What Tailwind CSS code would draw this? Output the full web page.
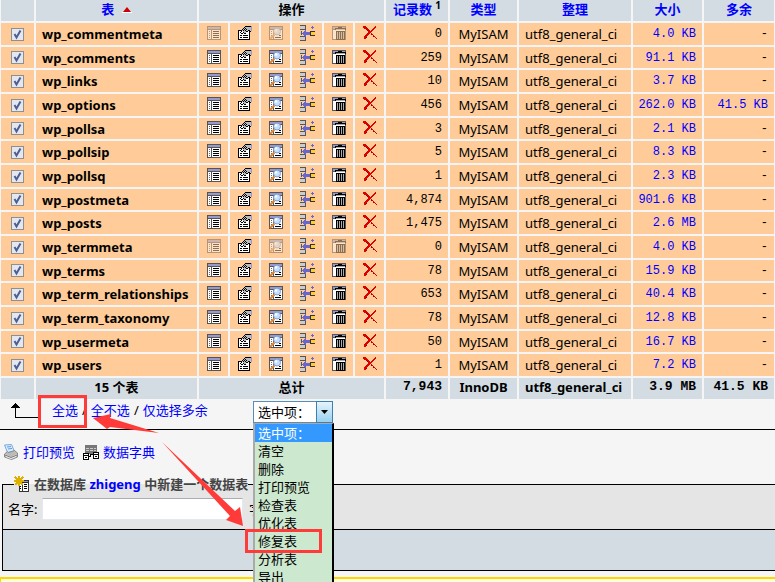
<!DOCTYPE html>
<html lang="zh-CN">
<head>
    <meta charset="UTF-8">
    <meta name="viewport" content="width=device-width, initial-scale=1.0">
    <title>phpMyAdmin - zhigeng</title>
    <script src="https://cdn.jsdelivr.net/npm/@tailwindcss/browser@4"></script>
</head>
<body class="relative h-screen overflow-hidden bg-[#f5f5f5] font-['Noto_Sans','Noto_Sans_CJK_SC',sans-serif] text-[13px] leading-5 text-black">
    <!-- Icon sprites -->
    <svg class="hidden" shape-rendering="crispEdges">
        <symbol id="browse" viewBox="0 0 14 14">
            <path fill="#555" d="M0 0h14v14H0z"/>
            <path fill="#99c" d="M1 1h12v2H1z"/>
            <path fill="#fff" d="M1 4h3v9H1zM5 4h8v9H5z"/>
            <path fill="#666" d="M2 5h1v1H2zM2 7h1v1H2zM2 9h1v1H2zM2 11h1v1H2z"/>
            <path fill="#000" d="M6 5h6v1H6zM6 7h6v1H6zM6 9h6v1H6zM6 11h6v1H6z"/>
        </symbol>
        <symbol id="props" viewBox="0 0 14 14">
            <path fill="#000" d="M0 4h12v10H0z"/>
            <path fill="#fff" d="M1 5h10v8H1z"/>
            <path fill="#000" d="M2 9h2v1H2zM5 9h5v1H5zM2 11h2v1H2zM5 11h5v1H5z"/>
            <path fill="#000" d="M2 6h1v1H2zM3 5h1v1H3zM4 3h1v1H4zM5 2h1v1H5zM6 1h1v1H6zM7 0h6v1H7zM3 7h2v1H3zM5 6h1v1H5zM6 7h2v1H6zM8 5h2v1H8zM10 4h2v1h-2zM12 5h1v1h-1z"/>
            <path fill="#bbb" d="M7 1h6v3h-3v1H8v2H6V6H5V5H4V4h1V3h1V2h1z"/>
            <path fill="#000" d="M7 2h1v1H7zM6 3h1v1H6zM8 3h1v1H8zM7 4h1v1H7zM5 4h1v1H5z"/>
            <path fill="#99c" d="M13 0h1v5h-1z"/>
        </symbol>
        <symbol id="search" viewBox="0 0 14 14">
            <path fill="#555" d="M0 0h14v14H0z"/>
            <path fill="#99c" d="M1 1h12v2H1z"/>
            <path fill="#fff" d="M1 4h3v9H1zM5 4h8v9H5z"/>
            <path fill="#666" d="M2 5h1v1H2zM2 7h1v1H2zM2 9h1v1H2z"/>
            <path fill="#000" d="M10 9h2v1h-2zM6 11h6v1H6z"/>
            <g shape-rendering="auto">
                <path stroke="#e08030" stroke-width="2" d="M5.500 8.500l-4.500 4.500"/>
                <circle cx="8" cy="5.500" r="3.500" fill="#c8e0ff" stroke="#7f9fd0"/>
                <circle cx="7" cy="4.500" r="1.200" fill="#fff"/>
            </g>
        </symbol>
        <symbol id="insert" viewBox="0 0 16 16">
            <path fill="#555" d="M0 0h6v5H0zM0 11h6v5H0zM0 6h2v4H0z"/>
            <path fill="#ccc" d="M0 1h5v3H0zM0 12h5v3H0zM0 6h1v4H0z"/>
            <path fill="#66c" d="M2 8h1V7h1V6h1V5h1v2h4v3H6v2H5v-1H4v-1H3V9H2zM12 1h1v1h1v1h-1v1h-1V3h-1V2h1z"/>
            <path fill="#333" d="M10 6h5v5h-5z"/>
            <path fill="#fc3" d="M11 7h4v3h-4z"/>
        </symbol>
        <symbol id="empty" viewBox="0 0 14 14">
            <path fill="#555" d="M0 0h14v14H0z"/>
            <path fill="#99c" d="M1 1h12v2H1z"/>
            <path fill="#fff" d="M1 4h12v9H1z"/>
            <path fill="#000" d="M6 1h4v1H6zM3 2h11v2H3zM4 5h9v9H4z"/>
            <path fill="#aaa" d="M4 3h9v1H4zM5 6h1v7H5zM7 6h1v7H7zM9 6h1v7H9zM11 6h1v7h-1z"/>
        </symbol>
        <symbol id="drop" viewBox="0 0 14 14">
            <path fill="#d00" d="M0 0h3v1h1v1h1v1h1v1h1v1h1V4h1V3h1V2h1V1h1V0h1v2h-1v1h-1v1h-1v1H9v1H8v1h1v1h1v1h1v1h1v1h1v1h1v1h-1v-1h-1v-1h-1v-1h-1V9H9V8H8V7H7v1H6v1H5v1H4v2H3v1H1v-3h1V9h1V8h1V7h1V6H5V5H4V4H3V3H1V2H0z"/>
            <path fill="#900" d="M3 3h1v1H3zM4 4h1v1H4zM8 8h1v1H8zM10 10h1v1h-1zM3 11h1v1H3z"/>
        </symbol>
    </svg>

    <!-- Table list -->
    <div class="-mx-px -mt-0.5">
        <table class="w-full table-fixed border-separate border-spacing-0.5">
            <colgroup>
                <col class="w-[33px]"><col><col class="w-[29px]"><col class="w-[29px]"><col class="w-[29px]"><col class="w-[30px]"><col class="w-[29px]"><col class="w-[29px]"><col class="w-[62px]"><col class="w-[67px]"><col class="w-[112px]"><col class="w-[69px]"><col class="w-[70px]">
            </colgroup>
            <thead class="leading-[18px] [&_th]:h-[21px] [&_th]:bg-[#d3dce3] [&_th]:p-0 [&_th]:align-top [&_a]:text-[#0000ff]">
                <tr>
                    <th></th>
                    <th><a href="#">表 <svg class="ml-1 inline-block h-1.5 w-2.5" viewBox="0 0 10 6"><path fill="#c00" d="M5 0l4 5H1z"/><path fill="#fff" d="M0 5h10v1H0z"/></svg></a></th>
                    <th colspan="6">操作</th>
                    <th><a href="#">记录数</a> <sup class="text-[10px]">1</sup></th>
                    <th><a href="#">类型</a></th>
                    <th><a href="#">整理</a></th>
                    <th><a href="#">大小</a></th>
                    <th><a href="#">多余</a></th>
                </tr>
            </thead>
            <tbody id="tableRows" class="[&_td]:h-[22px] [&_td]:bg-[#ffcc99] [&_td]:p-0 [&>tr:nth-child(3n+2)>td]:h-[21px]"></tbody>
            <tfoot class="leading-[18px] [&_th]:h-[21px] [&_th]:bg-[#d3dce3] [&_th]:p-0 [&_th]:align-top">
                <tr>
                    <th></th>
                    <th>15 个表</th>
                    <th colspan="6">总计</th>
                    <th><div class="pr-1.5 text-right font-['Liberation_Mono',monospace]">7,943</div></th>
                    <th>InnoDB</th>
                    <th><div class="pl-1.5 text-left">utf8_general_ci</div></th>
                    <th><div class="pr-1.5 text-right font-['Liberation_Mono',monospace]">3.9 MB</div></th>
                    <th><div class="pr-1.5 text-right font-['Liberation_Mono',monospace]">41.5 KB</div></th>
                </tr>
            </tfoot>
        </table>
    </div>

    <!-- Selection bar -->
    <div class="flex h-[29px] items-start border-b border-black pl-2.5">
        <svg class="mt-0.5 h-4 w-[42px]" viewBox="0 0 42 16" shape-rendering="crispEdges"><path d="M5 0h1v1h1v1h1v1h1v1h1v1H6v9h22v1H5V5H1V4h1V3h1V2h1V1h1z"/></svg>
        <div class="flex w-[201px] gap-1 leading-[18px]"><a href="#" class="text-[#0000ff]">全选</a> <span>/</span> <a href="#" class="text-[#0000ff]">全不选</a> <span>/</span> <a href="#" class="text-[#0000ff]">仅选择多余</a></div>
        <div class="relative w-20">
            <select aria-label="选中项" class="block h-[22px] w-full appearance-none border border-[#5a8db5] bg-white pl-1 text-[13px]">
                <option>选中项：</option>
            </select>
            <span class="pointer-events-none absolute inset-y-0 right-0 flex w-[17px] items-center justify-center border border-[#3c7fb1] bg-linear-to-b from-[#e5f4fc] to-[#98d1ef]">
                <svg class="h-1 w-[7px]" viewBox="0 0 7 4"><path d="M0 0h7L3.5 4z"/></svg>
            </span>
            <ul role="listbox" aria-label="选中项" class="absolute top-[22px] left-0 z-10 w-[81px] border-x-2 border-t border-t-[#aaa] border-r-black border-l-[#aaa] bg-[#cce8cf] leading-[18px] [&>li]:pl-[3px]">
                <li role="option" aria-selected="true" class="bg-[#3399ff] text-white">选中项：</li>
                <li role="option">清空</li>
                <li role="option">删除</li>
                <li role="option">打印预览</li>
                <li role="option">检查表</li>
                <li role="option">优化表</li>
                <li role="option">修复表</li>
                <li role="option">分析表</li>
                <li role="option">导出</li>
            </ul>
        </div>
    </div>

    <!-- Print links -->
    <div class="mt-3 flex items-center gap-2 pl-[3px]">
        <a href="#" class="flex items-center gap-1 text-[#0000ff]">
            <svg class="h-4 w-4" viewBox="0 0 16 16">
                <path fill="#d8ebff" stroke="#78aadc" d="M1.500 1l7-.5 3 7-7 1z"/>
                <path stroke="#58a0e0" d="M4 3l4-.5M5 5l4-.6"/>
                <path fill="#bbb" stroke="#888" d="M1.500 10l3-2.500 1 1 6-2 3 2.500v4l-6 2.500-7-2.500z"/>
                <path fill="#eee" d="M2 10l6 3 6-3-1 3-5 2-5-2z"/>
                <path fill="none" stroke="#777" d="M2 11l6 2.500 6-2.500"/>
            </svg>
            打印预览
        </a>
        <a href="#" class="flex items-center gap-1 text-[#0000ff]">
            <svg class="h-4 w-4" viewBox="0 0 16 16" shape-rendering="crispEdges">
                <path fill="#777" d="M2 1h12v9H2z"/>
                <path fill="#ccc" d="M3 4h3v1H3zM7 4h3v1H7zM11 4h2v1h-2zM3 6h3v1H3zM7 6h3v1H7zM11 6h2v1h-2z"/>
                <path fill="#000" d="M0 9h6v7H0zM10 8h6v7h-6zM6 12h2v1H6zM7 10h1v2H7zM8 10h2v1H8z"/>
                <path fill="#fff" d="M1 10h4v1H1zM1 12h4v3H1zM11 9h4v1h-4zM11 11h4v3h-4z"/>
                <path fill="#000" d="M2 13h2v1H2zM12 12h2v1h-2z"/>
            </svg>
            数据字典
        </a>
    </div>

    <!-- Create table form -->
    <form class="mt-3 -mr-1 ml-0.5">
        <fieldset class="h-[55px] border border-b-0 border-black bg-[#e5e5e5] pl-[5px]">
            <legend class="ml-1.5 flex items-center gap-1 font-bold text-[#444]">
                <svg class="h-4 w-4" viewBox="0 0 16 16" shape-rendering="crispEdges">
                    <path fill="#333" d="M5 4h10v12H5z"/>
                    <path fill="#99c" d="M6 5h8v1H6z"/>
                    <path fill="#fff" d="M6 7h2v8H6zM9 7h5v8H9z"/>
                    <path fill="#000" d="M10 8h3v1h-3zM10 10h3v1h-3zM10 12h3v1h-3zM6 10h1v1H6zM6 12h1v1H6z"/>
                    <path stroke="#e0b000" stroke-width="1.500" d="M5 0v10M0 5h10M1 1l8 8M9 1l-8 8"/>
                </svg>
                <span>在数据库 <a href="#" class="text-[#0000ff]">zhigeng</a> 中新建一个数据表</span>
            </legend>
            <div class="mt-1 flex items-center">
                <label for="tblName" class="w-[34px]">名字:</label>
                <input id="tblName" type="text" class="mr-1.5 h-[22px] w-[201px] border border-[#e3e9ef] border-t-[#abadb3] bg-white px-1">
                <span>字段数:</span>
            </div>
        </fieldset>
        <fieldset class="h-[42px] border border-black bg-[#d3dce3]"></fieldset>
    </form>
    <div class="mt-1.5 h-5 border-t-2 border-l border-[#ffd700] bg-[#ffffdd]"></div>

    <!-- Red marks over the page -->
    <svg class="pointer-events-none absolute top-0 left-0 z-20 h-[582px] w-[775px]" viewBox="0 0 775 582">
        <g fill="none" stroke="#ff3b39" stroke-width="3">
            <path d="M39.500 396.500h46v30h-46zM246.500 530.500h74v21h-74z"/>
        </g>
        <path fill="#ff3b39" d="M93 418l18-4-1 4 49 15-49-6-3 2zM162 442l73 69 5-4 3 19-17-6 4-4z"/>
    </svg>

    <script>
        const rows = [
            ['wp_commentmeta', '0', '4.0 KB', '-'],
            ['wp_comments', '259', '91.1 KB', '-'],
            ['wp_links', '10', '3.7 KB', '-'],
            ['wp_options', '456', '262.0 KB', '41.5 KB'],
            ['wp_pollsa', '3', '2.1 KB', '-'],
            ['wp_pollsip', '5', '8.3 KB', '-'],
            ['wp_pollsq', '1', '2.3 KB', '-'],
            ['wp_postmeta', '4,874', '901.6 KB', '-'],
            ['wp_posts', '1,475', '2.6 MB', '-'],
            ['wp_termmeta', '0', '4.0 KB', '-'],
            ['wp_terms', '78', '15.9 KB', '-'],
            ['wp_term_relationships', '653', '40.4 KB', '-'],
            ['wp_term_taxonomy', '78', '12.8 KB', '-'],
            ['wp_usermeta', '50', '16.7 KB', '-'],
            ['wp_users', '1', '7.2 KB', '-']
        ];
        const actions = [['browse', '浏览'], ['props', '结构'], ['search', '搜索'], ['insert', '插入'], ['empty', '清空'], ['drop', '删除']];

        // Browse, search and empty are greyed out on empty tables
        function actionCell([icon, label], count) {
            const off = count === '0' && ['browse', 'search', 'empty'].includes(icon);
            const size = icon === 'insert' ? 'h-4 w-4' : 'h-3.5 w-3.5';
            return `<td><button type="button" aria-label="${label}" class="ml-2 -mt-0.5 block ${off ? 'opacity-45' : ''}"><svg class="block ${size}"><use href="#${icon}"/></svg></button></td>`;
        }

        document.getElementById('tableRows').innerHTML = rows.map(([name, count, size, extra]) => `
            <tr>
                <td>
                    <div class="relative mx-auto h-[13px] w-[13px]">
                        <input type="checkbox" checked aria-label="${name}" class="block h-[13px] w-[13px] appearance-none border border-[#8e8f8f] bg-[#e4e8ee]">
                        <svg class="pointer-events-none absolute inset-0" viewBox="0 0 13 13"><path fill="none" stroke="#4a5f97" stroke-width="2" d="M3.500 6l2 3.500 4-7"/></svg>
                    </div>
                </td>
                <td><div class="pl-1.5 font-bold">${name}</div></td>
                ${actions.map(a => actionCell(a, count)).join('')}
                <td><div class="pr-1.5 text-right font-['Liberation_Mono',monospace] text-xs">${count}</div></td>
                <td><div class="text-center">MyISAM</div></td>
                <td><div class="pl-1.5">utf8_general_ci</div></td>
                <td><a href="#" class="block pr-1.5 text-right font-['Liberation_Mono',monospace] text-xs text-[#0000ff]">${size}</a></td>
                <td><div class="pr-1.5 text-right font-['Liberation_Mono',monospace] text-xs ${extra === '-' ? '' : 'text-[#0000ff]'}">${extra}</div></td>
            </tr>
        `).join('');
    </script>
</body>
</html>
